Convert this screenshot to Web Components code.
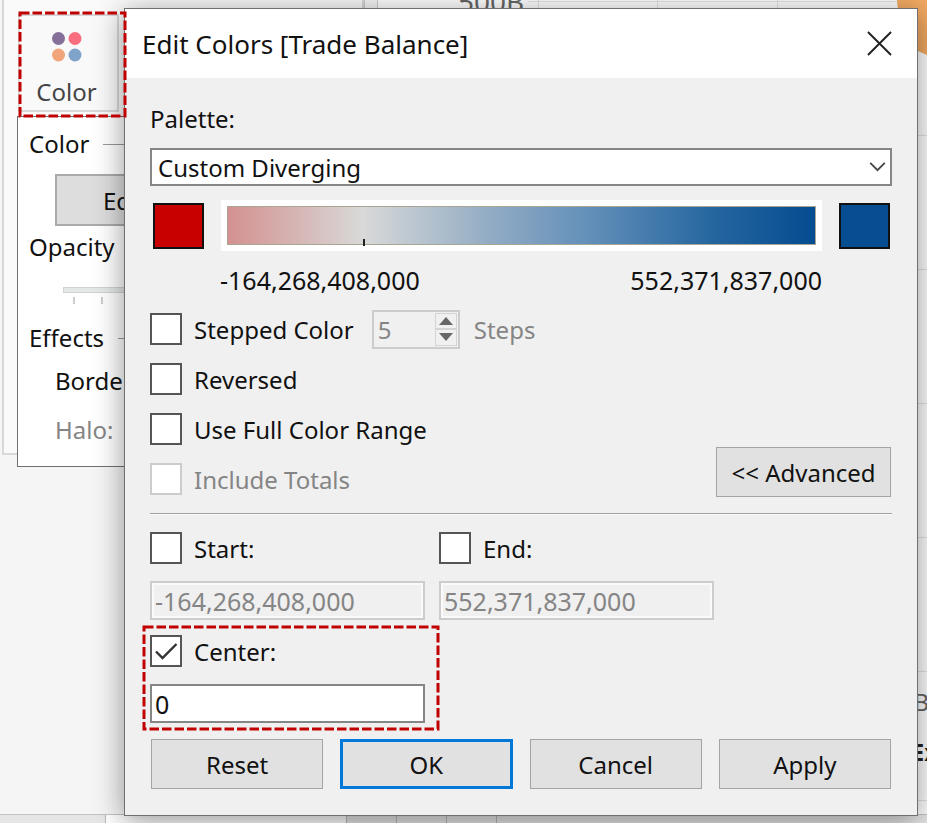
<!DOCTYPE html>
<html lang="en">
<head>
<meta charset="utf-8">
<title>Edit Colors [Trade Balance]</title>
<style>
  html, body { margin: 0; height: 100%; }
  body {
    font-family: "Noto Sans", "Open Sans", sans-serif;
    font-size: 24px;
    color: #111;
    overflow: hidden;
  }
</style>
</head>
<body>
<color-workspace></color-workspace>

<script>
const define = (name, html, setup) => {
  const template = document.createElement("template");
  template.innerHTML = html;
  customElements.define(name, class extends HTMLElement {
    constructor() {
      super();
      this.attachShadow({ mode: "open" }).append(template.content.cloneNode(true));
    }
    connectedCallback() { if (setup) setup(this, this.shadowRoot); }
  });
};

/* Dashed red frame laid over its nearest positioned ancestor */
define("callout-frame", `
  <style>
    :host { position: absolute; pointer-events: none; z-index: 5; }
    svg { display: block; width: 100%; height: 100%; overflow: visible; }
  </style>
  <svg aria-hidden="true"><rect width="100%" height="100%" fill="none" stroke="#c00000" stroke-width="3" stroke-dasharray="9.5 3"/></svg>
`);

define("push-button", `
  <style>
    :host { display: block; }
    button {
      box-sizing: border-box; width: 100%; height: 50px; padding: 0 8px;
      font: inherit; color: inherit; white-space: nowrap;
      background: #e1e1e1; border: 1px solid #a4a4a4; border-radius: 0;
    }
    :host([primary]) button { border: 3px solid #0078d7; }
  </style>
  <button type="button"><slot></slot></button>
`);

define("check-option", `
  <style>
    :host { display: flex; align-items: center; height: 50px; }
    label { display: flex; align-items: center; gap: 12px; white-space: nowrap; }
    .box { display: grid; flex: none; }
    input, svg { grid-area: 1 / 1; width: 32px; height: 32px; }
    input {
      appearance: none; box-sizing: border-box; margin: 0;
      background: #fff; border: 2px solid #555;
    }
    svg { display: none; pointer-events: none; }
    input:checked + svg { display: block; }
    :host([disabled]) { color: #858585; }
    :host([disabled]) input { border-color: #ccc; }
  </style>
  <label>
    <span class="box">
      <input type="checkbox">
      <svg viewBox="0 0 32 32" fill="none" stroke="#333" stroke-width="2.4" aria-hidden="true"><path d="M6 16.5 12.5 23 26.5 9"/></svg>
    </span>
    <span><slot></slot></span>
  </label>
`, (host, root) => {
  const input = root.querySelector("input");
  input.checked = host.hasAttribute("checked");
  input.disabled = host.hasAttribute("disabled");
});

define("step-count", `
  <style>
    :host { display: block; color: #858585; }
    label { display: flex; align-items: center; gap: 14px; }
    .spin {
      box-sizing: border-box; display: flex; width: 88px; height: 39px;
      border: 2px solid #ccc; padding: 1px;
    }
    input {
      flex: 1; min-width: 0; padding: 0 3px; border: 0; background: none;
      font: inherit; color: inherit;
    }
    .arrows { display: grid; grid-template-rows: 1fr 1fr; width: 22px; }
    button { display: grid; place-items: center; padding: 0; background: #f0f0f0; border: 1px solid #d4d4d4; }
    svg { display: block; width: 14px; height: 8px; fill: #666; }
  </style>
  <label>
    <span class="spin">
      <input type="text" value="5" disabled>
      <span class="arrows">
        <button type="button" disabled aria-label="More steps"><svg viewBox="0 0 14 8"><path d="M0 8 7 0l7 8z"/></svg></button>
        <button type="button" disabled aria-label="Fewer steps"><svg viewBox="0 0 14 8"><path d="M0 0 7 8l7-8z"/></svg></button>
      </span>
    </span>
    <span>Steps</span>
  </label>
`);

define("range-field", `
  <style>
    :host { display: block; position: relative; }
    input {
      display: block; box-sizing: border-box; width: 100%; height: 39px; margin-top: 8px;
      padding: 0 3px; font: inherit; font-size: 25px; color: inherit;
      background: #fff; border: 2px solid #868686; border-radius: 0;
    }
    input:disabled { color: #858585; background: #f0f0f0; border-color: #ccc; box-shadow: inset 0 0 0 2px #fafafa; }
  </style>
  <check-option><slot></slot></check-option>
  <input type="text">
  <slot name="frame"></slot>
`, (host, root) => {
  const input = root.querySelector("input");
  const on = host.hasAttribute("checked");
  input.value = host.getAttribute("value");
  input.disabled = !on;
  input.setAttribute("aria-label", host.textContent.trim());
  const box = root.querySelector("check-option").shadowRoot.querySelector("input");
  box.checked = on;
  box.onchange = () => { input.disabled = !box.checked; };
});

define("palette-select", `
  <style>
    :host { display: block; }
    label { display: block; line-height: 38px; margin-bottom: 10px; }
    .wrap { display: grid; align-items: center; }
    select, svg { grid-area: 1 / 1; }
    select {
      appearance: none; box-sizing: border-box; width: 100%; height: 38px; padding: 0 40px 0 6px;
      font: inherit; color: inherit; background: #fff; border: 2px solid #868686; border-radius: 0;
    }
    svg { justify-self: end; width: 17px; height: 10px; margin-right: 6px; pointer-events: none; }
  </style>
  <label for="palette">Palette:</label>
  <div class="wrap">
    <select id="palette"><option>Custom Diverging</option></select>
    <svg viewBox="0 0 18 11" fill="none" stroke="#444" stroke-width="2" aria-hidden="true"><path d="M1 1l8 8 8-8"/></svg>
  </div>
`);

define("color-ramp", `
  <style>
    :host { display: block; }
    .row { display: flex; align-items: center; gap: 17px; padding: 0 2px 0 3px; }
    button { flex: none; box-sizing: border-box; width: 51px; height: 46px; padding: 0; border: 2px solid #111; }
    .low { background: #c80000; }
    .high { background: #064d92; }
    .bar { flex: 1; background: #fff; padding: 6px; }
    .fill {
      box-sizing: border-box; height: 39px; border: 1px solid #aaa593; position: relative;
      background: linear-gradient(90deg, #d39190, #d8d9d8 23%, #94adc5 44%, #6490b9 61%, #2767a0 82%, #044c90);
    }
    .mark { position: absolute; left: 23%; bottom: -2px; width: 2px; height: 7px; background: #222; }
    .ends { display: flex; justify-content: space-between; margin-top: 10px; padding: 0 70px; line-height: 38px; font-size: 25px; }
  </style>
  <div class="row">
    <button class="low" type="button" aria-label="Low color"></button>
    <div class="bar"><div class="fill"><div class="mark"></div></div></div>
    <button class="high" type="button" aria-label="High color"></button>
  </div>
  <div class="ends"><span>-164,268,408,000</span><span>552,371,837,000</span></div>
`);

define("edit-dialog", `
  <style>
    :host {
      display: block; background: #f0f0f0; border: 1px solid #707070;
      box-shadow: 0 5px 28px rgba(0,0,0,.42);
    }
    header { display: flex; align-items: center; justify-content: space-between; height: 69px; background: #fff; padding: 0 25px 0 17px; }
    h1 { margin: 0; font-size: 26px; font-weight: 400; }
    .close { display: block; padding: 0; border: 0; background: none; }
    .close svg { display: block; width: 25px; height: 25px; }
    main { padding: 22px 25px 26px; }
    color-ramp { margin-top: 14px; }
    .options { display: flex; justify-content: space-between; align-items: flex-end; margin-top: 5px; }
    .stepped { display: flex; align-items: center; gap: 18px; }
    .advanced { width: 175px; margin: 0 1px 7px 0; }
    hr { margin: 9px 0 8px; border: 0; height: 1px; background: #a0a0a0; border-bottom: 1px solid #fafafa; }
    .fields { display: grid; grid-template-columns: 275fr 275fr 164fr; gap: 6px 14px; }
    .center { grid-column: 1; }
    callout-frame { inset: 1px -13px -6px -6px; }
    footer { display: grid; grid-template-columns: repeat(4, 1fr); gap: 17px; margin: 16px 1px 0; }
  </style>
  <header>
    <h1>Edit Colors [Trade Balance]</h1>
    <button class="close" type="button" aria-label="Close"><svg viewBox="0 0 26 26" fill="none" stroke="#222" stroke-width="2"><path d="M1 1l24 24M25 1 1 25"/></svg></button>
  </header>
  <main>
    <palette-select></palette-select>
    <color-ramp></color-ramp>
    <div class="options">
      <div>
        <div class="stepped"><check-option>Stepped Color</check-option><step-count></step-count></div>
        <check-option>Reversed</check-option>
        <check-option>Use Full Color Range</check-option>
        <check-option disabled>Include Totals</check-option>
      </div>
      <push-button class="advanced">&lt;&lt; Advanced</push-button>
    </div>
    <hr>
    <div class="fields">
      <range-field value="-164,268,408,000">Start:</range-field>
      <range-field value="552,371,837,000">End:</range-field>
      <range-field class="center" value="0" checked>Center:<callout-frame slot="frame"></callout-frame></range-field>
    </div>
    <footer>
      <push-button>Reset</push-button>
      <push-button primary>OK</push-button>
      <push-button>Cancel</push-button>
      <push-button>Apply</push-button>
    </footer>
  </main>
`);

define("color-tile", `
  <style>
    :host { display: block; position: relative; width: 101px; }
    button {
      display: flex; flex-direction: column; align-items: center; box-sizing: border-box;
      width: 100%; height: 98px; padding: 16px 4px 0 0; gap: 13px;
      background: #f9f9f9; border: 2px solid #d8d8d8; font: inherit; color: #444;
    }
    svg { display: block; width: 30px; height: 30px; flex: none; }
    span { line-height: 34px; }
    callout-frame { inset: -1px -6px -4px 2px; }
  </style>
  <button type="button">
    <svg viewBox="0 0 30 30" aria-hidden="true"><circle cx="6.500" cy="6.500" r="6.500" fill="#85709a"/><circle cx="23" cy="6.500" r="6.500" fill="#f96e7f"/><circle cx="6.500" cy="23" r="6.500" fill="#f2a57b"/><circle cx="23" cy="23" r="6.500" fill="#80a3ca"/></svg>
    <span>Color</span>
  </button>
  <callout-frame></callout-frame>
`);

define("color-popup", `
  <style>
    :host { display: block; box-sizing: border-box; background: #fff; border: 1px solid #707070; padding: 7px 11px 16px; }
    .head { display: flex; align-items: center; gap: 14px; line-height: 40px; }
    .head::after { content: ""; flex: 1; height: 1px; background: #999; }
    button {
      display: block; box-sizing: border-box; width: 220px; height: 52px; margin: 10px 0 1px 26px; padding: 0 0 0 46px;
      font: inherit; color: inherit; text-align: left; background: #ddd; border: 2px solid #aaa;
    }
    label, .sub { display: block; line-height: 40px; }
    input {
      appearance: none; display: block; width: 280px; height: 6px; margin: 20px 0 4px 34px;
      box-sizing: border-box; background: #e4e8e7; border: 1px solid #cfd3d2;
    }
    input::-webkit-slider-thumb { appearance: none; width: 12px; height: 26px; background: #0078d7; }
    .ticks { height: 7px; margin: 0 0 14px 44px; background: repeating-linear-gradient(90deg, #ccc 0 2px, transparent 2px 28px); }
    .sub { margin: 3px 0 9px 26px; }
    .off { color: #858585; margin-bottom: 0; }
  </style>
  <div class="head">Color</div>
  <button type="button">Edit Colors…</button>
  <label for="opacity">Opacity</label>
  <input id="opacity" type="range" min="0" max="100" value="100">
  <div class="ticks"></div>
  <div class="head">Effects</div>
  <div class="sub">Border:</div>
  <div class="sub off">Halo:</div>
`);

/* Marks card with the open color menu under its tile */
define("marks-card", `
  <style>
    :host {
      display: block; position: relative; box-sizing: border-box; height: 455px; margin-left: 2px;
      background: #fafafa; border: 2px solid #d8d8d8; border-top: 0; padding: 14px 0 0 14px;
    }
    color-popup { position: absolute; left: 13px; top: 116px; width: 340px; }
  </style>
  <color-tile></color-tile>
  <color-popup></color-popup>
`);

/* The chart behind the dialog; its marks and axis texts sit on a free canvas */
define("chart-canvas", `
  <style>
    :host { display: block; position: relative; overflow: hidden; background: #fff; border-left: 1px solid #ccc; color: #666; }
    i { position: absolute; background: #e4e4e4; }
    .v { top: 0; width: 1px; height: 100%; }
    .h { left: 150px; right: 0; height: 1px; }
    .tick, .axis, .name { position: absolute; line-height: 24px; white-space: nowrap; }
    .tick { left: 80px; top: -11px; font-size: 28px; }
    .axis { right: -2px; top: 690px; }
    .name { right: -11px; top: 740px; color: #222; font-weight: 700; }
    svg { position: absolute; right: 0; top: 0; width: 30px; height: 55px; }
  </style>
  <i class="v" style="left:160px"></i><i class="v" style="left:279px"></i><i class="v" style="left:399px"></i>
  <i class="h" style="top:1px"></i><i class="h" style="top:135px"></i><i class="h" style="top:269px"></i><i class="h" style="top:403px"></i>
  <i class="h" style="top:537px"></i><i class="h" style="top:671px"></i><i class="h" style="top:800px"></i>
  <svg viewBox="0 0 30 55" aria-hidden="true"><path d="M0 0H30V55L21 51Q2 34 0 0Z" fill="#f4ab63"/></svg>
  <div class="tick">500B</div>
  <div class="axis">B</div>
  <div class="name">Ex</div>
`);

define("sheet-tabs", `
  <style>
    :host { display: grid; grid-template-columns: 105px 240px 49px 49px 49px 1fr; gap: 1px; height: 9px; background: #b8b8b8; border-top: 1px solid #c4c4c4; box-sizing: border-box; }
    span { background: #e6e6e6; }
    .on { background: #fff; }
  </style>
  <span></span><span class="on"></span><span></span><span></span><span></span><span></span>
`);

define("color-workspace", `
  <style>
    :host { display: flex; flex-direction: column; position: relative; min-height: 100vh; overflow: hidden; background: #f5f5f5; }
    .work { flex: 1; display: grid; grid-template-columns: 364px 13px 1fr; }
    .gutter { border-left: 1px solid #ccc; }
    edit-dialog { position: absolute; left: 124px; right: 9px; top: 8px; z-index: 2; }
  </style>
  <div class="work">
    <marks-card></marks-card>
    <div class="gutter"></div>
    <chart-canvas></chart-canvas>
  </div>
  <sheet-tabs></sheet-tabs>
  <edit-dialog></edit-dialog>
`);
</script>
</body>
</html>
